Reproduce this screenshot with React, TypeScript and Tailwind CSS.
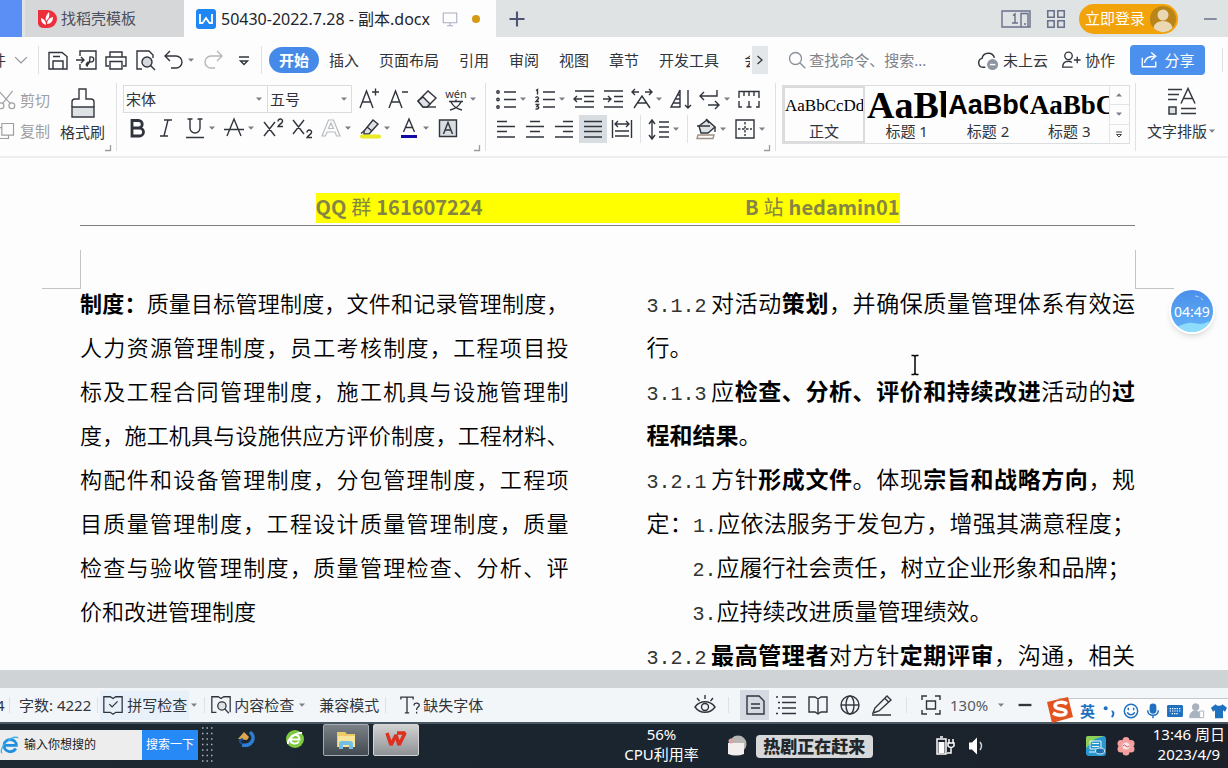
import type { ReactNode } from 'react';

const UI_FONT = "font-['Noto_Sans','Noto_Sans_CJK_SC',sans-serif]";
const MONO = "font-['Liberation_Mono','Noto_Sans_CJK_SC',monospace]";

const MENUS = ['插入', '页面布局', '引用', '审阅', '视图', '章节', '开发工具'];

const STYLES = [
  { label: '标题 1', sample: 'AaBb', cls: "text-[38px] font-bold font-['Liberation_Serif',serif]" },
  { label: '标题 2', sample: 'AaBbC', cls: "text-[27px] font-bold font-['Liberation_Sans',sans-serif]" },
  { label: '标题 3', sample: 'AaBbC', cls: "text-[27px] font-bold font-['Liberation_Serif',serif]" },
];

type Run = { t: string; b?: boolean; n?: boolean };
type Line = { runs: Run[]; fill?: boolean; indent?: boolean };

const LEFT: Line[] = [
  { fill: true, runs: [{ t: '制度：', b: true }, { t: '质量目标管理制度，文件和记录管理制度，' }] },
  { fill: true, runs: [{ t: '人力资源管理制度，员工考核制度，工程项目投' }] },
  { fill: true, runs: [{ t: '标及工程合同管理制度，施工机具与设施管理制' }] },
  { fill: true, runs: [{ t: '度，施工机具与设施供应方评价制度，工程材料、' }] },
  { fill: true, runs: [{ t: '构配件和设备管理制度，分包管理制度，工程项' }] },
  { fill: true, runs: [{ t: '目质量管理制度，工程设计质量管理制度，质量' }] },
  { fill: true, runs: [{ t: '检查与验收管理制度，质量管理检查、分析、评' }] },
  { runs: [{ t: '价和改进管理制度' }] },
];

const RIGHT: Line[] = [
  { fill: true, runs: [{ t: '3.1.2', n: true }, { t: '对活动' }, { t: '策划', b: true }, { t: '，并确保质量管理体系有效运' }] },
  { runs: [{ t: '行。' }] },
  {
    fill: true,
    runs: [{ t: '3.1.3', n: true }, { t: '应' }, { t: '检查、分析、评价和持续改进', b: true }, { t: '活动的' }, { t: '过', b: true }],
  },
  { runs: [{ t: '程和结果', b: true }, { t: '。' }] },
  {
    fill: true,
    runs: [{ t: '3.2.1', n: true }, { t: '方针' }, { t: '形成文件', b: true }, { t: '。体现' }, { t: '宗旨和战略方向', b: true }, { t: '，规' }],
  },
  { fill: true, runs: [{ t: '定：' }, { t: '1.', n: true }, { t: '应依法服务于发包方，增强其满意程度；' }] },
  { indent: true, runs: [{ t: '2.', n: true }, { t: '应履行社会责任，树立企业形象和品牌；' }] },
  { indent: true, runs: [{ t: '3.', n: true }, { t: '应持续改进质量管理绩效。' }] },
  {
    fill: true,
    runs: [{ t: '3.2.2', n: true }, { t: '最高管理者', b: true }, { t: '对方针' }, { t: '定期评审', b: true }, { t: '，沟通，相关' }],
  },
];

function Icon({ d, children, cls = 'size-6', w = 1.4 }: { d?: string; children?: ReactNode; cls?: string; w?: number }) {
  return (
    <svg viewBox="0 0 24 24" className={`shrink-0 ${cls}`} fill="none" stroke="currentColor" strokeWidth={w} aria-hidden="true">
      {d && <path d={d} />}
      {children}
    </svg>
  );
}

function Caret({ cls = 'w-[10px]' }: { cls?: string }) {
  return (
    <svg viewBox="0 0 10 6" className={`h-[6px] shrink-0 ${cls}`} fill="#7b8088" aria-hidden="true">
      <path d="M2 1.5h6L5 4.8z" />
    </svg>
  );
}

// Toolbar button, optionally with a drop-down arrow
function Tool({ label, d, children, drop, cls = '' }: { label: string; d?: string; children?: ReactNode; drop?: boolean; cls?: string }) {
  return (
    <button aria-label={label} className={`flex h-7 shrink-0 items-center justify-center ${cls}`}>
      <Icon d={d}>{children}</Icon>
      {drop && <Caret />}
    </button>
  );
}

function Launcher() {
  return (
    <svg viewBox="0 0 8 8" className="absolute right-1 bottom-1 size-2" fill="none" stroke="#9a9da1" strokeWidth="1.3" aria-hidden="true">
      <path d="M1 6.5h5.5V1" />
    </svg>
  );
}

function Sep({ cls = 'h-6' }: { cls?: string }) {
  return <div className={`w-px shrink-0 bg-[#dfe1e3] ${cls}`} />;
}

function TitleBar() {
  return (
    <header className="flex h-[37px] shrink-0 items-stretch bg-[#dfe3e4] text-[15px]">
      <div className="w-[22px] bg-[#5c8ff5]" />
      <button className="ml-[3px] flex w-[159px] items-center gap-1 bg-[#d6d7d9] pl-3 text-[#4a4f5e]">
        <svg viewBox="0 0 20 20" className="size-5" aria-hidden="true">
          <path d="M1 1h10a9 9 0 0 1 0 18H6a5 5 0 0 1-5-5z" fill="#ec2f3c" />
          <path d="M9 16c-3-1-5-3-5-7 3 1 5 3 5 7zM9 12c-1-3 0-6 3-9 1 4 0 7-3 9zM10 15c0-3 2-6 6-7 0 4-2 7-6 7z" fill="#fff" />
        </svg>
        找稻壳模板
      </button>
      <div className="flex w-[312px] items-center bg-[#fdfdfd] pl-3">
        <svg viewBox="0 0 20 20" className="size-5 shrink-0" aria-hidden="true">
          <rect width="20" height="20" rx="3" fill="#1e86f5" />
          <path d="M4 5v9h2.500L10 9l3.500 5H16V5" fill="none" stroke="#fff" strokeWidth="1.800" />
        </svg>
        <span className="ml-[5px] text-[16px] whitespace-nowrap text-[#22252e]">50430-2022.7.28 - 副本.docx</span>
        <Icon cls="ml-auto size-[18px] text-[#a9aebf]" d="M3 4h18v13H3zM12 17v4M8 21h8" />
        <span className="mr-4 ml-[13px] size-2 rounded-full bg-[#d39a12]" />
      </div>
      <button aria-label="新建" className="flex w-[42px] items-center justify-center text-[#4c5375]">
        <Icon cls="size-[18px]" w={2.8} d="M12 2v20M2 12h20" />
      </button>
      <div className="ml-auto flex items-center text-[#69708a]">
        <button aria-label="窗口">
          <svg viewBox="0 0 30 20" className="h-5 w-[30px]" fill="none" stroke="currentColor" strokeWidth="1.4" aria-hidden="true">
            <path d="M1 2h28v16H1zM20 4.500h7v13.500h-7zM23 15h2M12 6.500l2-1.500v9M11 14h6" />
          </svg>
        </button>
        <button aria-label="应用" className="ml-[14px]">
          <Icon cls="size-[22px]" w={1.7} d="M3 3h7v7H3zM14 3h7v7h-7zM3 14h7v7H3zM14 14h7v7h-7z" />
        </button>
        <button className="ml-3 flex h-[30px] w-[99px] items-center justify-between rounded-full bg-[#f2a30a] pr-px pl-[6px] whitespace-nowrap text-white">
          立即登录
          <svg viewBox="0 0 28 28" className="size-7" aria-hidden="true">
            <circle cx="14" cy="14" r="13" fill="#b98418" />
            <circle cx="14" cy="10" r="5.500" fill="#ead7b4" />
            <path d="M4.500 23a9.500 7 0 0 1 19 0 13 13 0 0 1-19 0z" fill="#ead7b4" />
          </svg>
        </button>
        <Sep cls="ml-[10px] h-6 bg-[#c5c8cb]" />
        <button aria-label="最小化" className="mr-[9px] ml-3">
          <Icon cls="size-[18px]" w={2} d="M4 12h17" />
        </button>
      </div>
    </header>
  );
}

function MenuBar() {
  return (
    <nav className="flex h-[46px] shrink-0 items-center overflow-hidden bg-[#fdfdfd] text-[15px] text-[#30343c]">
      <button className="flex items-center gap-2 whitespace-nowrap">
        <span className="-ml-[9px]">件</span>
        <Icon cls="size-[14px] text-[#8d9197]" w={2} d="M2 7l10 10L22 7" />
      </button>
      <Sep cls="ml-[10px] h-7" />
      <div className="ml-[7px] flex items-center gap-[5px]">
        <Tool label="保存" d="M3 4.500h13l5 4V21H3zM7 21v-8h10v8M7 8.500h7" />
        <Tool label="输出为PDF" d="M5 8V3h16v18H5v-5M1 12h8M6 9l3 3-3 3M12 17c2-1 3-3 3-8 5-1 5 5 0 5-4 0-5 4-2 4" />
        <Tool label="打印" d="M6 9V4h12v5M5 18H2V9h20v9h-3M6 13.500h12V21H6z" />
        <Tool label="打印预览" d="M9 21H4V3h12l4 4v3">
          <circle cx="14" cy="14" r="5" fill="#d5d9dc" />
          <path d="M17.500 17.500L22 22" />
        </Tool>
        <Tool label="撤销" drop d="M8 3L3 8l5 5M3 8h11a5.500 5.500 0 0 1 0 12H9" />
        <Tool label="恢复" cls="text-[#b4b7bb]" d="M16 3l5 5-5 5M21 8H10a5.500 5.500 0 0 0 0 12h4" />
        <Tool label="自定义" d="M7 9h10M8.500 13h7l-3.500 3.500z" cls="ml-[2px]" />
      </div>
      <Sep cls="ml-[5px] h-7" />
      <button className="ml-[7px] h-[26px] w-[50px] shrink-0 rounded-full bg-[#458ae8] font-bold text-white">开始</button>
      <div className="ml-[10px] flex gap-5 whitespace-nowrap">
        {MENUS.map((m) => (
          <button key={m}>{m}</button>
        ))}
      </div>
      <button className="ml-[25px] w-[6px] shrink-0 overflow-hidden whitespace-nowrap">会</button>
      <button aria-label="更多" className="ml-[2px] flex h-7 w-4 shrink-0 items-center justify-center bg-[#e4e7ea]">
        <Icon cls="size-[12px]" w={2.5} d="M7 4l9 8-9 8" />
      </button>
      <label className="ml-5 flex min-w-0 flex-1 items-center gap-[3px] text-[#8b919b]">
        <Icon cls="size-[18px]" w={1.8}>
          <circle cx="10" cy="10" r="8" />
          <path d="M16 16l7 7" />
        </Icon>
        <input aria-label="查找" placeholder="查找命令、搜索..." className="min-w-0 flex-1 bg-transparent outline-none placeholder:text-[#7d828b]" />
      </label>
      <div className="flex shrink-0 items-center whitespace-nowrap">
        <button className="flex items-center gap-1">
          <Icon cls="size-[22px]" w={1.6}>
            <path d="M9 20H6.500a5 5 0 0 1-1-9.800A7 7 0 0 1 19 9.500" />
            <circle cx="17" cy="17" r="6" fill="#8e95a0" stroke="none" />
            <path d="M14 17h6" stroke="#fff" />
          </Icon>
          未上云
        </button>
        <button className="ml-[13px] flex items-center gap-1">
          <Icon cls="size-5" w={1.6}>
            <circle cx="9" cy="7" r="4.500" />
            <path d="M14 20.500H2c0-4 2-7 7-7 2 0 3 .5 4 1.500M15.500 12h8M19.500 8v8" />
          </Icon>
          协作
        </button>
        <button className="ml-[15px] flex h-[30px] w-[75px] items-center justify-center gap-[6px] rounded bg-[#4b90ec] text-white">
          <Icon cls="size-[18px]" w={1.8} d="M3 9v12h18v-7M6 16c1-6 5-9 13-9M15 2l6 5-6 5" />
          分享
        </button>
        <Sep cls="mr-[5px] ml-[17px] h-6" />
      </div>
    </nav>
  );
}

function Ribbon() {
  return (
    <section className="flex h-[75px] shrink-0 overflow-hidden border-b-2 border-[#eceeef] bg-[#fdfdfd] text-[15px] text-[#30343c]">
      {/* clipboard */}
      <div className="relative flex w-[116px] shrink-0">
        <div className="flex flex-col gap-[3px] pt-[3px] text-[#9c9fa3]">
          <button className="flex h-7 w-[50px] items-center justify-end gap-1 overflow-hidden whitespace-nowrap">
            <Icon cls="size-5" d="M3 1l14 15M20 1L8 16">
              <circle cx="6" cy="19" r="3.500" />
              <circle cx="19" cy="19" r="3.500" />
            </Icon>
            剪切
          </button>
          <button className="flex h-7 w-[50px] items-center justify-end gap-1 overflow-hidden whitespace-nowrap">
            <Icon cls="size-5" d="M7 3h14v14H7zM7 8H2v13h13v-4" />
            复制
          </button>
        </div>
        <button className="ml-[10px] flex flex-col items-center pt-[3px]">
          <svg viewBox="0 0 26 34" className="h-[34px] w-[26px]" fill="none" stroke="#34383f" strokeWidth="1.4" aria-hidden="true">
            <path d="M2 21h22v10H2z" fill="#dfe2e5" />
            <path d="M2 21v-5c0-2 1-3 3-3h4V3h7v10h5c2 0 3 1 3 3v5" />
          </svg>
          <span className="leading-6">格式刷</span>
        </button>
        <Launcher />
      </div>
      <Sep cls="h-[68px]" />
      {/* font */}
      <div className="relative flex w-[368px] shrink-0 flex-col gap-px pt-[2px] pl-[6px]">
        <div className="flex items-center gap-[5px]">
          <div className="flex h-[28px] border border-[#d9dbdd]">
            <div className="relative flex w-[144px] items-center border-r border-[#d9dbdd]">
              <select aria-label="字体" className="w-full appearance-none bg-transparent pl-[2px] outline-none">
                <option>宋体</option>
              </select>
              <Caret cls="absolute right-[3px] w-[10px]" />
            </div>
            <div className="relative flex w-[83px] items-center">
              <select aria-label="字号" className="w-full appearance-none bg-transparent pl-[2px] outline-none">
                <option>五号</option>
              </select>
              <Caret cls="absolute right-[2px] w-[10px]" />
            </div>
          </div>
          <Tool label="增大字号" d="M3 21L9.500 4 16 21M5.500 15h8M15 5h7M18.500 1.500v7" />
          <Tool label="减小字号" d="M3 21L9.500 4 16 21M5.500 15h8M16 5h6" />
          <Tool label="清除格式">
            <path d="M3 14L13 4l8 7-9 9H8z" />
            <path d="M3 14l5 6h4l3-3-7-7z" fill="#dfe2e5" />
            <path d="M12 20h9" />
          </Tool>
          <Tool label="拼音指南" drop>
            <text x="12" y="11" textAnchor="middle" fontSize="11" fill="currentColor" stroke="none">
              wén
            </text>
            <path d="M5 14.500h14M12 12.500v2M7 15c2 4 6 7 11 8M17 15c-2 4-6 7-11 8" />
          </Tool>
        </div>
        <div className="flex items-center gap-[5px] pl-[2px]">
          <Tool label="加粗">
            <path d="M7 4.500h6.500a3.700 3.700 0 0 1 0 7.500H7zM7 12h7.500a4 4 0 0 1 0 8H7z" strokeWidth="2.8" />
          </Tool>
          <Tool label="斜体" d="M10 4h8M6 20h8M14 4l-4 16" />
          <Tool label="下划线" drop d="M7 3v9a5 5 0 0 0 10 0V3M4.500 3h5M14.500 3h5M3 21.500h18" />
          <Tool label="删除线" drop d="M5 20L12 3l7 17M2 13.500h20" />
          <Tool label="上标">
            <path d="M3 6l11 14M14 6L3 20M17 5.500c0-3.500 5-3 4.500 0-.5 2-3.500 3-4.500 5h5" />
          </Tool>
          <Tool label="下标">
            <path d="M3 4l11 14M14 4L3 18M17 16.500c0-3.500 5-3 4.500 0-.5 2-3.500 3-4.500 5h5" />
          </Tool>
          <Tool label="文字效果" drop cls="text-[#b9bcc0]">
            <path d="M3 20L9.500 4h5L21 20h-3.500l-1.500-4H8l-1.500 4zM9.500 12.500h5L12 7z" strokeWidth="1.2" />
          </Tool>
          <Tool label="突出显示" drop>
            <path d="M6 15l9-11 5 4-9 10H6z" fill="#dfe2e5" />
            <path d="M9 11l5 4M3 17.500l3-2.500" />
            <path d="M4 20.500h17" stroke="#e9ec22" strokeWidth="4" strokeLinecap="round" />
          </Tool>
          <Tool label="字体颜色" drop>
            <path d="M6.500 16L12 3l5.500 13M8.500 11.500h7" />
            <path d="M4 20.500h16" stroke="#1009a8" strokeWidth="3" />
          </Tool>
          <Tool label="字符底纹">
            <path d="M3.500 4h17v16.500h-17z" fill="#d8dde1" />
            <path d="M7.500 18L12 6.500 16.500 18M9 14h6" />
          </Tool>
        </div>
        <Launcher />
      </div>
      <Sep cls="h-[68px]" />
      {/* paragraph */}
      <div className="relative flex w-[289px] shrink-0 flex-col gap-[2px] pt-[2px] pl-2">
        <div className="flex items-center gap-[5px]">
          <Tool label="项目符号" drop d="M10 5h12M10 12.500h12M10 20h12">
            <circle cx="4" cy="5" r="1.200" />
            <circle cx="4" cy="12.500" r="1.200" />
            <circle cx="4" cy="20" r="1.200" />
          </Tool>
          <Tool label="编号" drop d="M10 5h12M10 12.500h12M10 20h12M3 3.500l1.500-1v5M2.500 11c1-2 3-1 3 .5L3 14.500h3M2.500 17.500h3l-1.500 2c3 0 2 3-1.500 2.500" />
          <Tool label="减少缩进" d="M3 4h19M12 9.500h10M12 14.500h10M3 20h19M10 12H2M5 9l-3 3 3 3" />
          <Tool label="增加缩进" d="M3 4h19M13 9.500h9M13 14.500h9M3 20h19M2 12h8M7 9l3 3-3 3" />
          <Tool label="中文版式" drop d="M2 5h7M5 2L2 5l3 3M15 5h7M19 2l3 3-3 3M4 21L12 9l8 12M7.500 16h9" />
          <Tool label="排序">
            <path d="M2 20l9-17v17zM11 8H8.500M11 12H6M11 16H4M19 3v18M16 18l3 3 3-3" />
          </Tool>
          <Tool label="换行" drop d="M19 3v6H2M6 5L2 9l4 4M10 18h11M17 14l4 4-4 4" />
          <Tool label="标尺" d="M2 11V4.500h20V11M7 4.500V9M12 4.500V9M17 4.500V9M2 14v6h3M12 14v6M9.500 20h5M22 14v6h-3" />
        </div>
        <div className="flex items-center gap-[5px]">
          <Tool label="左对齐" d="M3 4.500h10M3 9.500h18M3 14.500h10M3 20h18" />
          <Tool label="居中" d="M7 4.500h10M3 9.500h18M7 14.500h10M3 20h18" />
          <Tool label="右对齐" d="M11 4.500h10M3 9.500h18M11 14.500h10M3 20h18" />
          <Tool label="两端对齐" cls="-mx-0.5 w-7 bg-[#d8dde2]" d="M3 4.500h18M3 9.500h18M3 14.500h18M3 20h18" />
          <Tool label="分散对齐" d="M2.500 3v18M21.500 3v18M5 7h14M8 4L5 7l3 3M16 4l3 3-3 3M5 14h14M5 19h14" />
          <Sep cls="mx-px h-7" />
          <Tool label="行距" drop d="M5 4v17M2 7l3-4 3 4M2 18l3 4 3-4M12 5h10M12 10h10M12 15h10M12 20h10" />
          <Sep cls="mx-px h-7" />
          <Tool label="底纹颜色" drop>
            <path d="M5 9l8-6 8 7-7 6H7z" fill="#dfe2e5" />
            <path d="M3 9h13M12 2l3 4M21 10v5" />
            <path d="M4 18h16l-1 3.500H3z" stroke="#a08f84" />
          </Tool>
          <Tool label="边框" drop>
            <path d="M3 3h18v18H3z" />
            <path d="M12 5v14M5 12h14" strokeDasharray="2.500 1.500" />
          </Tool>
        </div>
        <Launcher />
      </div>
      <Sep cls="h-[68px]" />
      {/* styles */}
      <div className="mt-[2px] ml-[6px] flex h-[59px] min-w-0 flex-1 border border-[#dcdee0]">
        <button className="flex w-[82px] shrink-0 flex-col overflow-hidden border-2 border-[#d9dbdd]">
          <span className="h-[34px] w-full overflow-hidden text-left font-['Liberation_Serif',serif] text-[17px] leading-[36px] text-black">AaBbCcDd</span>
          <span className="w-full text-center leading-[18px]">正文</span>
        </button>
        {STYLES.map((s) => (
          <button key={s.label} className="flex min-w-0 flex-1 flex-col overflow-hidden pl-[2px]">
            <span className={`h-[36px] w-full overflow-hidden text-left leading-[38px] text-black ${s.cls}`}>{s.sample}</span>
            <span className="w-full text-center leading-[18px]">{s.label}</span>
          </button>
        ))}
        <div className="flex w-5 shrink-0 flex-col divide-y divide-[#e3e5e7] border-l border-[#e3e5e7]">
          <button aria-label="上一行" className="flex flex-1 items-center justify-center">
            <Caret cls="w-[10px] rotate-180" />
          </button>
          <button aria-label="下一行" className="flex flex-1 items-center justify-center">
            <Caret />
          </button>
          <button aria-label="展开样式" className="flex flex-1 items-center justify-center">
            <Icon cls="size-3" w={1.8} d="M6 8h12M7 13h10l-5 5z" />
          </button>
        </div>
      </div>
      <Sep cls="ml-[5px] h-[68px]" />
      <button className="flex shrink-0 flex-col items-center pt-[3px] pr-[11px] pl-[11px]">
        <svg viewBox="0 0 30 30" className="mb-[2px] h-[31px] w-[30px]" fill="none" stroke="#34383f" strokeWidth="1.5" aria-hidden="true">
          <path d="M1 3h14M1 8h11M1 13h9M14 17L21 2l7 15M16.500 12h9M14 22h15M14 27h15" />
          <path d="M2 20.500h7v7H2z" fill="#dfe2e5" />
        </svg>
        <span className="flex items-center leading-6 whitespace-nowrap">
          文字排版
          <Caret />
        </span>
      </button>
    </section>
  );
}

function Column({ lines, cls }: { lines: Line[]; cls: string }) {
  return (
    <div className={`min-w-0 leading-[44px] whitespace-nowrap ${cls}`}>
      {lines.map((line, i) => (
        <p key={i} className={`h-11 ${line.fill ? '[text-align-last:justify]' : ''} ${line.indent ? 'pl-[46px]' : ''}`}>
          {line.runs.map((r, j) => (
            <span
              key={j}
              className={
                r.n
                  ? `text-[20px] leading-none text-[#333] ${MONO} ${r.t.length > 2 ? 'pr-[4px]' : ''}`
                  : r.b
                    ? 'leading-none font-bold'
                    : 'leading-none font-[350]'
              }
            >
              {r.t}
            </span>
          ))}
        </p>
      ))}
    </div>
  );
}

function Document() {
  return (
    <main className="relative min-h-0 flex-1 overflow-hidden bg-[#fdfdfd] text-black">
      <div className="mr-[93px] ml-20 flex justify-center border-b border-[#7f7f7f] pt-[35px] pb-[2px]">
        <h1 className="flex h-[30px] w-[584px] justify-between bg-[#ffff00] font-['Noto_Sans_CJK_SC',sans-serif] text-[20px] leading-[28px] font-bold text-[#858545]">
          <span className="flex gap-[5px]">
            <span>QQ</span>
            <span className="font-normal">群</span>
            <span>161607224</span>
          </span>
          <span className="flex gap-[5px]">
            <span>B</span>
            <span className="font-normal">站</span>
            <span>hedamin01</span>
          </span>
        </h1>
      </div>
      {/* page margin marks */}
      <div className="mt-6 mr-[54px] ml-[42px] flex justify-between">
        <div className="h-[39px] w-[39px] border-r border-b border-[#c3c3c3]" />
        <div className="h-[39px] w-[39px] border-b border-l border-[#c3c3c3]" />
      </div>
      <div className="-mt-[9px] mr-[93px] ml-20 grid grid-cols-2 gap-[78px] font-['Noto_Sans_CJK_SC',sans-serif]">
        <Column lines={LEFT} cls="text-[22px]" />
        <Column lines={RIGHT} cls="text-[23px]" />
      </div>

      <svg viewBox="0 0 10 22" className="absolute top-[196px] left-[910px] h-[22px] w-[10px]" fill="none" stroke="#000" strokeWidth="1.5" aria-hidden="true">
        <path d="M1.500 1.500h2.500l1 1 1-1h2.500M5 2.500v17M1.500 20.500h2.500l1-1 1 1h2.500" />
      </svg>
      <div className="absolute top-[130px] right-[13px] flex size-[46px] items-center justify-center overflow-hidden rounded-full border-2 border-white bg-linear-to-b from-[#4a8fe8] to-[#62b2fa] text-[14px] text-white shadow-md">
        <svg viewBox="0 0 42 42" className="absolute inset-0 size-full" aria-hidden="true">
          <path d="M2 37c8 0 12-5 20-4 6 1 10 2 16-2v13H2z" fill="#8ddcfb" />
          <path d="M24 6c3 0 6 2 8 4" fill="none" stroke="#a9d4fb" strokeDasharray="4 2" />
        </svg>
        <span className="relative">04:49</span>
      </div>
    </main>
  );
}

function StatusBar() {
  return (
    <footer className="flex h-[34px] shrink-0 items-center bg-[#f3f6f8] text-[15px] whitespace-nowrap text-[#30343c]">
      <span className="-ml-[4px] w-[13px]">4</span>
      <Sep cls="h-4" />
      <span className="mr-[6px] ml-[9px]">字数: 4222</span>
      <Sep cls="h-4" />
      <button className="ml-[2px] flex h-[29px] items-center gap-[3px] bg-[#e8f1fa] px-[2px]">
        <Icon cls="size-[22px]" d="M2 3h7l3 2 3-2h7v17h-7l-3 2-3-2H2zM8 11l3 3 6-6" />
        拼写检查
      </button>
      <button aria-label="拼写选项">
        <Caret />
      </button>
      <Sep cls="mx-[5px] h-4" />
      <button className="flex items-center gap-[2px]">
        <Icon cls="size-[22px]" d="M7 20H2V3h7l3 2 3-2h7v17M2 20h5">
          <circle cx="13" cy="13" r="4.500" fill="#dfe2e5" />
          <path d="M16 16l4.500 5" />
        </Icon>
        内容检查
        <Caret cls="ml-px w-[10px]" />
      </button>
      <button className="mr-[6px] ml-3">兼容模式</button>
      <Sep cls="h-4" />
      <button className="ml-[14px] flex items-center gap-[2px]">
        <Icon cls="size-[21px]" w={1.5} d="M1 5V2.500h14V5M8 2.500v18M5.500 20.500h5M16 12c0-4 6.500-3.500 6 0-.5 2-3 2-3 5M19 19v2" />
        缺失字体
      </button>
      <div className="ml-auto flex shrink-0 items-center">
        <Tool label="护眼模式" d="M2 14c5-7 15-7 20 0-5 7-15 7-20 0zM12 2v4M4 5l2.500 3M20 5l-2.500 3">
          <circle cx="12" cy="14" r="3.500" />
        </Tool>
        <Sep cls="mx-[11px] h-4" />
        <Tool label="页面视图" cls="w-[29px] h-[30px] bg-[#d5dae2]" d="M4 3h12l5 5v13H4zM8 11h9M8 15h9" />
        <div className="ml-[5px] flex gap-2">
          <Tool label="大纲" d="M8 4h14M8 9.500h14M8 15h14M8 20.500h14M2 4h2M4 9.500h2M4 15h2M2 20.500h2" />
          <Tool label="阅读版式" d="M3 4h6l3 2 3-2h6v15h-6l-3 2-3-2H3zM12 6v15" />
          <Tool label="Web版式">
            <circle cx="12" cy="12" r="9" />
            <ellipse cx="12" cy="12" rx="4" ry="9" />
            <path d="M3 12h18" />
          </Tool>
          <Tool label="写作模式" d="M5 15L17 3l4 4L9 18l-6 2zM15 5.500l4 4M2 22h19" />
        </div>
        <Sep cls="mx-[12px] h-4" />
        <Tool label="最佳显示比例" d="M3 7V3h5M16 3h5v4M21 17v4h-5M8 21H3v-4M7.500 8h9v8h-9z" />
        <div className="relative ml-[7px] flex items-center">
          <select aria-label="显示比例" className="w-[56px] appearance-none bg-transparent text-[#555b66] outline-none">
            <option>130%</option>
          </select>
          <Caret cls="absolute right-0 w-[10px]" />
        </div>
        <button aria-label="缩小" className="mr-[196px] ml-[12px]">
          <Icon cls="size-[14px]" w={4} d="M1 12h22" />
        </button>
      </div>
    </footer>
  );
}

// Input-method bar floating over the status bar
function ImeBar() {
  return (
    <div className="absolute right-0 bottom-[46px] flex h-6 w-[170px] items-center gap-[6px] border-t border-[#c3c8cc] bg-[#fdfdfd] pl-[22px] text-[#2070c0]">
      <svg viewBox="0 0 28 28" className="absolute -top-[3px] -left-[12px] size-7" aria-hidden="true">
        <path d="M1 6l21-5 5 20-21 6z" fill="#e4521f" />
        <path d="M21 8c-4-3-12-2-12 2 0 4 11 2 11 6 0 4-9 4-13 1" fill="none" stroke="#fff" strokeWidth="3.5" />
      </svg>
      <button className="text-[15px] leading-6 font-bold">英</button>
      <Icon cls="size-4">
        <circle cx="7" cy="8" r="3" fill="currentColor" stroke="none" />
        <path d="M16 13c3-1 4 5 0 8" strokeWidth="3" />
      </Icon>
      <Icon cls="size-4" w={2.2}>
        <circle cx="12" cy="12" r="10" />
        <path d="M8 7v4M16 7v4M6.500 14c2 5 9 5 11 0" />
      </Icon>
      <Icon cls="size-4" w={2.2}>
        <rect x="8" y="2" width="8" height="13" rx="4" fill="currentColor" />
        <path d="M4 11c0 10 16 10 16 0M12 18v5" />
      </Icon>
      <Icon cls="size-4" w={1.8}>
        <rect x="1" y="4" width="22" height="16" rx="1" fill="currentColor" />
        <path d="M4 8.500h16M4 12h16M7 16h10" stroke="#fff" strokeDasharray="2 1.500" />
      </Icon>
      <Icon cls="size-4 text-[#a9b2bf]">
        <circle cx="10" cy="6" r="5" fill="currentColor" />
        <path d="M1 22c0-14 16-14 17 0z" fill="currentColor" />
        <path d="M16 12h6v10h-6z" fill="#fff" />
      </Icon>
      <svg viewBox="0 0 24 24" className="size-4 shrink-0" fill="currentColor" aria-hidden="true">
        <path d="M7 2c2 3 8 3 10 0l7 5-3 6-3-2v12H6V11l-3 2-3-6z" />
      </svg>
    </div>
  );
}

function Taskbar() {
  return (
    <div className="flex h-[46px] shrink-0 items-start overflow-hidden border-t-2 border-[#4a5863] bg-linear-to-r from-[#1d2831] via-[#1a2530] to-[#1b2029] text-[15px] whitespace-nowrap text-white">
      <label className="mt-[6px] flex h-[30px] w-[142px] items-center bg-[#ededed] text-[12px]">
        <svg viewBox="0 0 22 22" className="size-5 shrink-0" fill="none" stroke="#1f8fe0" strokeWidth="3" aria-hidden="true">
          <path d="M4 11.500h14c0-8-12-9-13.500-1C3.500 18 13 21 17.500 15" />
          <path d="M2 20C-1 14 12 0 20 3" stroke="#3fb2ee" strokeWidth="1.5" />
        </svg>
        <input aria-label="搜索内容" placeholder="输入你想搜的" className="ml-1 min-w-0 flex-1 bg-transparent outline-none placeholder:text-[#1a1a1a]" />
      </label>
      <button className="mt-[6px] h-[30px] w-[56px] bg-[#2789f6] text-[12px]">搜索一下</button>
      <svg viewBox="0 0 12 40" className="mt-[2px] ml-1 h-10 w-3" stroke="#aab2b8" strokeWidth="1.5" strokeDasharray="1.500 3" aria-hidden="true">
        <path d="M0 2h12M0 7.500h12M0 13h12M0 18.500h12M0 24h12M0 29.500h12M0 35h12" />
      </svg>
      <button aria-label="浏览器" className="mt-[5px] ml-[23px]">
        <svg viewBox="0 0 20 20" className="size-5" fill="none" aria-hidden="true">
          <path d="M13 3c7 6 1 15-8 13" stroke="#2b7fd6" strokeWidth="3.5" />
          <path d="M1 10l6-7 5 5-2 3z" fill="#dba750" />
          <path d="M5 15c-3-2-3-4 1-5" stroke="#184d94" strokeWidth="2" />
        </svg>
      </button>
      <button aria-label="360浏览器" className="mt-[5px] ml-7">
        <svg viewBox="0 0 20 20" className="size-5" fill="none" aria-hidden="true">
          <circle cx="10" cy="10" r="9" fill="#7dc83c" />
          <path d="M5.500 10.500h9c0-6-8-6-9-.5-.5 5 6 6 8.500 2.500M3 15C2 11 10 3 17 4" stroke="#fff" strokeWidth="2" />
        </svg>
      </button>
      <button aria-label="资源管理器" className="ml-[18px] flex h-8 w-[46px] items-center justify-center rounded-xs border border-[#a5abb0] bg-linear-to-b from-[#7b8287] to-[#434b52]">
        <svg viewBox="0 0 22 20" className="h-5 w-[22px]" aria-hidden="true">
          <path d="M2 2h8l2 2h8v13H2z" fill="#eccb69" />
          <path d="M3 6h17v11H3z" fill="#f8e49b" />
          <path d="M4 19v-5q0-3 3-3h8q3 0 3 3v5h-4v-4H8v4z" fill="#74bfe5" />
        </svg>
      </button>
      <button aria-label="WPS" className="ml-1 flex h-8 w-[46px] items-center justify-center rounded-xs border border-[#d2d4d6] bg-linear-to-b from-[#d2d2d2] to-[#8f9296]">
        <svg viewBox="0 0 22 18" className="h-[18px] w-[22px]" fill="none" stroke="#df2f1e" strokeWidth="3.5" aria-hidden="true">
          <path d="M2 2l4 12 5-10 3 10 6-12h-8" strokeLinejoin="bevel" />
        </svg>
      </button>
      <div className="ml-auto flex items-start">
        <div className="text-center text-[15px] leading-5">
          <div>56%</div>
          <div>CPU利用率</div>
        </div>
        <svg viewBox="0 0 22 22" className="mt-[11px] ml-[27px] size-[22px]" aria-hidden="true">
          <circle cx="12" cy="9" r="8.500" fill="#b8b5b5" />
          <path d="M2 8h16v11q-8 3-16 0z" fill="#f3eeee" />
          <circle cx="5" cy="6" r="2.500" fill="#d9a5a8" />
        </svg>
        <button className="mt-[11px] ml-2 h-[23px] w-[117px] rounded-sm bg-[#d6d8d9] text-[17px] leading-[23px] font-black text-[#22272b]">热剧正在赶来</button>
        <svg viewBox="0 0 20 20" className="mt-[12px] ml-[62px] size-5" fill="none" stroke="#fff" strokeWidth="1.5" aria-hidden="true">
          <path d="M2 3h9v15H2zM5 1h3" />
          <path d="M3.500 6h6v11h-6z" fill="#fff" stroke="none" />
          <path d="M14 3v4M18 3v4M13 7h6v3q-3 3-6 0zM16 12v5h-4" />
        </svg>
        <svg viewBox="0 0 20 20" className="mt-[12px] ml-3 size-5" fill="none" stroke="#ccd2d6" aria-hidden="true">
          <path d="M2 6.500h3l5-5v17l-5-5H2z" fill="#fff" stroke="none" />
          <path d="M13 6q3 4 0 8" strokeWidth="1.5" />
        </svg>
        <svg viewBox="0 0 20 20" className="mt-[12px] ml-[99px] size-5" fill="none" aria-hidden="true">
          <rect width="20" height="20" rx="3" fill="#2b97cf" />
          <path d="M0 12V2q0-2 2-2h16L9 3z" fill="#8ccf58" />
          <path d="M4 5h11v8H4zM6 7.500h7M6 10.500h7M3 16h6" stroke="#e3f4fb" />
          <ellipse cx="14" cy="15" rx="4.500" ry="3" fill="#1d6fb0" stroke="#d9eef9" />
        </svg>
        <svg viewBox="0 0 20 20" className="mt-[12px] ml-[10px] size-5" fill="#f3a09f" aria-hidden="true">
          <circle cx="10" cy="4.500" r="3.500" />
          <circle cx="15" cy="7.500" r="3.500" />
          <circle cx="15" cy="13" r="3.500" />
          <circle cx="10" cy="16" r="3.500" />
          <circle cx="5" cy="13" r="3.500" />
          <circle cx="5" cy="7.500" r="3.500" />
          <circle cx="10" cy="10" r="3.500" fill="#fbe6e6" />
          <path d="M7 10q1.500-2 3 0t3 0" fill="none" stroke="#c25268" />
        </svg>
        <div className="mr-[3px] ml-[17px] text-center leading-5">
          <div>13:46 周日</div>
          <div>2023/4/9</div>
        </div>
      </div>
    </div>
  );
}

export default function App() {
  return (
    <div className={`relative flex h-screen flex-col overflow-hidden bg-[#fdfdfd] ${UI_FONT}`}>
      <TitleBar />
      <MenuBar />
      <Ribbon />
      <Document />
      <div className="h-[18px] shrink-0 bg-[#cfd3d6]" />
      <StatusBar />
      <Taskbar />
      <ImeBar />
    </div>
  );
}
